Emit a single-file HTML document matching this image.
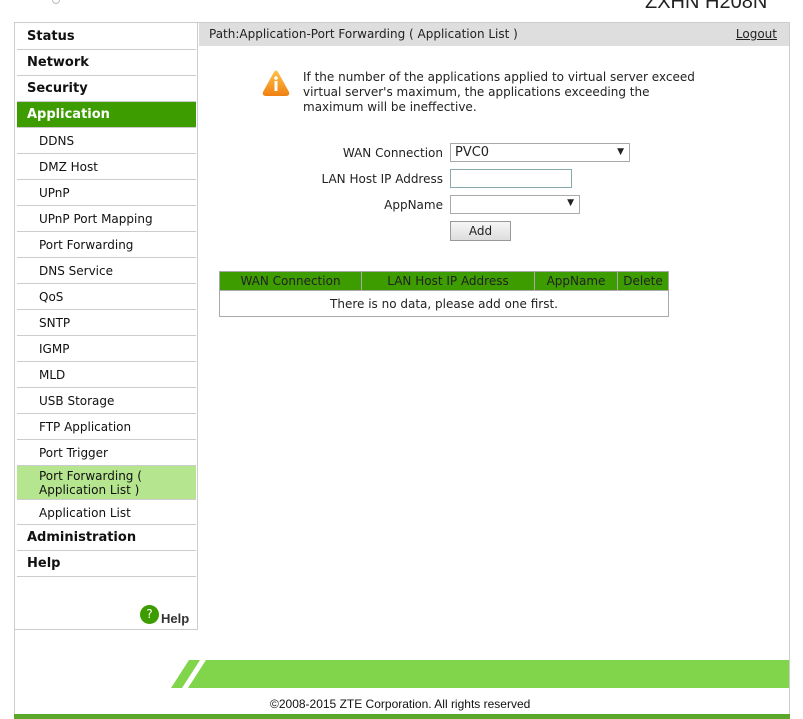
<!DOCTYPE html>
<html><head><meta charset="utf-8"><style>
*{margin:0;padding:0;box-sizing:border-box}
body{width:803px;height:719px;overflow:hidden;background:#fff;font-family:Verdana,"DejaVu Sans",sans-serif;font-size:12px;color:#222;position:relative}
.abs{position:absolute}
.frame{left:14px;top:22px;width:776px;height:697px;border-left:1px solid #ccc;border-right:1px solid #ccc;border-top:1px solid #ccc}
.side{left:15px;top:23px;width:183px;height:607px;border:1px solid #ccc;border-top:none;border-left:none;padding-top:1px}
.it{height:26px;border-bottom:1px solid #ccc;line-height:26px;padding-left:10px;font-weight:bold;font-size:13px;color:#111;margin-left:2px;margin-right:1px}
.sub{height:26px;border-bottom:1px solid #ccc;line-height:26px;padding-left:22px;font-size:12px;color:#111;margin-left:2px;margin-right:1px}
.act{background:#3c9c00;color:#fff}
.hl{background:#b6e58f;height:34px;line-height:14px;padding-top:3px}
.path{left:199px;top:23px;width:590px;height:23px;background:#dedede;line-height:23px;padding-left:10px;font-size:12px}
td,th{border:1px solid #aaa;font-size:12px}
</style></head><body>
<div class="abs" style="left:52px;top:-6px;width:8px;height:10px;border:1px solid #bbb;border-radius:4px"></div>
<div class="abs" style="left:645px;top:-9px;font-family:'Liberation Sans',sans-serif;font-size:20px;color:#222">ZXHN H208N</div>
<div class="abs frame"></div>
<div class="abs side">
<div class="it">Status</div><div class="it">Network</div><div class="it">Security</div>
<div class="it act">Application</div>
<div class="sub">DDNS</div><div class="sub">DMZ Host</div><div class="sub">UPnP</div><div class="sub">UPnP Port Mapping</div><div class="sub">Port Forwarding</div><div class="sub">DNS Service</div><div class="sub">QoS</div><div class="sub">SNTP</div><div class="sub">IGMP</div><div class="sub">MLD</div><div class="sub">USB Storage</div><div class="sub">FTP Application</div><div class="sub">Port Trigger</div>
<div class="sub hl">Port Forwarding (<br>Application List )</div>
<div class="sub" style="height:25px">Application List</div>
<div class="it">Administration</div><div class="it">Help</div>
<div class="abs" style="left:125px;top:582px;width:19px;height:19px;border-radius:50%;background:#3c9c00;color:#fff;text-align:center;line-height:19px;font-size:12px">?</div>
<div class="abs" style="left:146px;top:588px;font-family:'Liberation Sans',sans-serif;font-weight:bold;font-size:13px;color:#333">Help</div>
</div>
<div class="abs path">Path:Application-Port Forwarding ( Application List )<span style="position:absolute;right:12px;text-decoration:underline">Logout</span></div>
<svg class="abs" style="left:261px;top:69px" width="30" height="28" viewBox="0 0 30 28"><defs><linearGradient id="g" x1="0" y1="0" x2="0" y2="1"><stop offset="0" stop-color="#ffc04a"/><stop offset="1" stop-color="#f08010"/></linearGradient></defs><path d="M13 3 Q15 0 17 3 L28 23 Q29 27 25 27 L5 27 Q1 27 2 23 Z" fill="url(#g)"/><rect x="13.5" y="12" width="3" height="10" fill="#fff"/><circle cx="15" cy="9" r="1.8" fill="#fff"/></svg>
<div class="abs" style="left:303px;top:70px;line-height:15px;width:400px">If the number of the applications applied to virtual server exceed virtual server's maximum, the applications exceeding the maximum will be ineffective.</div>
<div class="abs" style="left:300px;top:146px;width:143px;text-align:right">WAN Connection</div>
<div class="abs" style="left:450px;top:143px;width:180px;height:19px;border:1px solid #aaa;padding-left:4px;font-size:13px;line-height:17px">PVC0<span style="position:absolute;right:5px;font-size:9px">▼</span></div>
<div class="abs" style="left:300px;top:172px;width:143px;text-align:right">LAN Host IP Address</div>
<div class="abs" style="left:450px;top:169px;width:122px;height:19px;border:1px solid #8aa"></div>
<div class="abs" style="left:300px;top:198px;width:143px;text-align:right">AppName</div>
<div class="abs" style="left:450px;top:195px;width:130px;height:19px;border:1px solid #aaa"><span style="position:absolute;right:5px;top:2px;font-size:9px">▼</span></div>
<div class="abs" style="left:450px;top:221px;width:61px;height:20px;border:1px solid #999;background:linear-gradient(#f6f6f6,#ddd);text-align:center;line-height:18px">Add</div>
<table class="abs" style="left:219px;top:271px;width:450px;border-collapse:collapse">
<tr style="background:#3c9c00;height:19px"><th style="font-weight:normal;width:142px">WAN Connection</th><th style="font-weight:normal;width:173px">LAN Host IP Address</th><th style="font-weight:normal;width:83px">AppName</th><th style="font-weight:normal">Delete</th></tr>
<tr style="height:26px"><td colspan="4" style="text-align:center">There is no data, please add one first.</td></tr>
</table>
<svg class="abs" style="left:171px;top:660px" width="618" height="28"><polygon points="18,0 29,0 11,28 0,28" fill="#80d54a"/><polygon points="35,0 618,0 618,28 17,28" fill="#80d54a"/></svg>
<div class="abs" style="left:270px;top:697px;font-family:'Liberation Sans',sans-serif;font-size:12px;color:#111">©2008-2015 ZTE Corporation. All rights reserved</div>
<div class="abs" style="left:14px;top:714px;width:776px;height:5px;background:#5aa72a"></div>
</body></html>
